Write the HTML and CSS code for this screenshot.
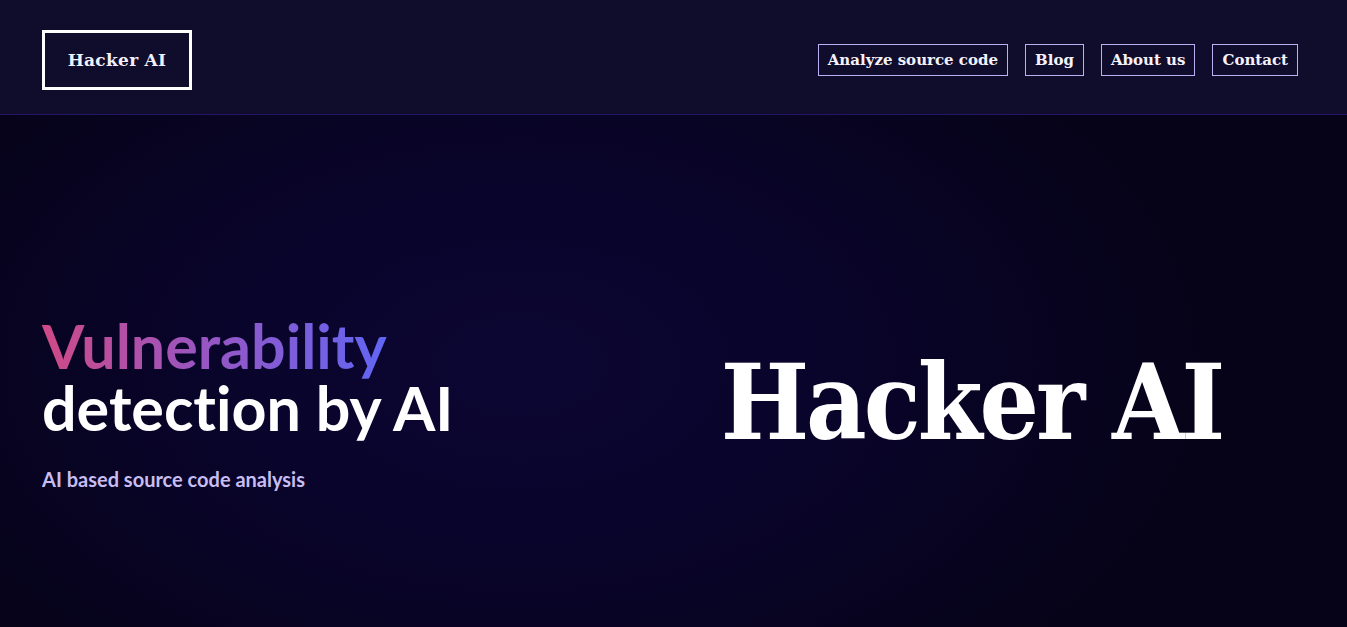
FILE: index.html
```html
<!DOCTYPE html>
<html>
<head>
<meta charset="utf-8">
<link rel="stylesheet" href="styles.css">
</head>
<body>
<header class="topbar">
  <div class="logo">Hacker AI</div>
  <nav class="nav">
    <a class="nav-link" href="#">Analyze source code</a>
    <a class="nav-link" href="#">Blog</a>
    <a class="nav-link" href="#">About us</a>
    <a class="nav-link" href="#">Contact</a>
  </nav>
</header>
<main class="hero">
  <div class="hero-text">
    <h1 class="title"><span class="grad">Vulnerability</span><br>detection by AI</h1>
    <p class="subtitle">AI based source code analysis</p>
  </div>
  <div class="hero-brand">Hacker AI</div>
</main>
</body>
</html>
```
FILE: styles.css
```css
* { box-sizing: border-box; }
html, body { margin: 0; padding: 0; }
body {
  background: #07041c;
  width: 1347px;
  height: 627px;
  overflow: hidden;
  font-family: "Lato", "Noto Sans", sans-serif;
  font-variant-ligatures: none;
}
.topbar {
  height: 115px;
  background: #100c2b;
  border-bottom: 1px solid #221566;
  display: flex;
  align-items: center;
  justify-content: space-between;
  padding: 5px 49px 0 42px;
}
.logo {
  width: 150px;
  height: 60px;
  border: 3px solid #ffffff;
  display: flex;
  align-items: center;
  justify-content: center;
  color: #f2f0fa;
  font-family: "DejaVu Serif", serif;
  font-weight: bold;
  font-size: 17px;
  letter-spacing: 0.3px;
}
.nav {
  display: flex;
  gap: 17px;
}
.nav-link {
  display: block;
  height: 32px;
  line-height: 30px;
  padding: 0 9px;
  border: 1px solid #b9b1f4;
  color: #f4f2fb;
  text-decoration: none;
  font-family: "DejaVu Serif", serif;
  font-weight: bold;
  font-size: 15px;
}
.hero {
  height: 512px;
  display: flex;
  align-items: center;
  padding: 63px 0 0 42px;
  background: radial-gradient(ellipse 700px 420px at 520px 250px, #0c0633 0%, #09042a 45%, #060318 100%);
}
.hero-text {
  width: 600px;
  flex: none;
}
.title {
  margin: 0;
  font-size: 61px;
  line-height: 62px;
  font-weight: 700;
  color: #ffffff;
}
.grad {
  background: linear-gradient(90deg, #cf4a86 0%, #9a55c0 45%, #6166f4 100%);
  -webkit-background-clip: text;
  background-clip: text;
  color: transparent;
}
.subtitle {
  margin: 28px 0 0;
  color: #c8bdf2;
  font-size: 20px;
  line-height: 24px;
  font-weight: 700;
}
.hero-brand {
  flex: 1;
  text-align: center;
  padding-right: 46px;
  color: #ffffff;
  font-family: "DejaVu Serif Condensed", "DejaVu Serif", serif;
  font-stretch: condensed;
  font-weight: bold;
  font-size: 104px;
  letter-spacing: -3px;
}
```
